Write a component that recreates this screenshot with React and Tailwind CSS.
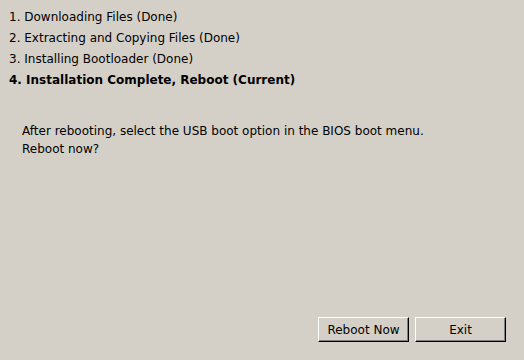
import React from 'react';

const steps = [
  { id: 1, label: 'Downloading Files (Done)' },
  { id: 2, label: 'Extracting and Copying Files (Done)' },
  { id: 3, label: 'Installing Bootloader (Done)' },
  { id: 4, label: 'Installation Complete, Reboot (Current)', current: true },
];

function ClassicButton({ children }) {
  return (
    <button className="w-[91px] h-[25px] bg-[#d4d0c8] border border-t-white border-l-white border-b-black border-r-black shadow-[inset_-1px_-1px_0_#808080] text-[12px] text-black leading-none">
      {children}
    </button>
  );
}

export default function App() {
  return (
    <div className="w-[524px] h-[360px] bg-[#d4d0c8] text-black flex flex-col font-['DejaVu_Sans',sans-serif]">
      {/* Step list */}
      <ol className="pl-[9px] pt-[7px] flex flex-col gap-0">
        {steps.map(step => (
          <li
            key={step.id}
            className={`text-[12px] leading-[21px] ${step.current ? 'font-bold' : ''}`}
          >
            {step.id}. {step.label}
          </li>
        ))}
      </ol>

      {/* Message */}
      <div className="pl-[22px] pt-[31px] text-[12px] leading-[18px]">
        <p>After rebooting, select the USB boot option in the BIOS boot menu.</p>
        <p>Reboot now?</p>
      </div>

      {/* Buttons */}
      <div className="mt-auto flex justify-end gap-[6px] pr-[18px] pb-[18px]">
        <ClassicButton>Reboot Now</ClassicButton>
        <ClassicButton>Exit</ClassicButton>
      </div>
    </div>
  );
}
